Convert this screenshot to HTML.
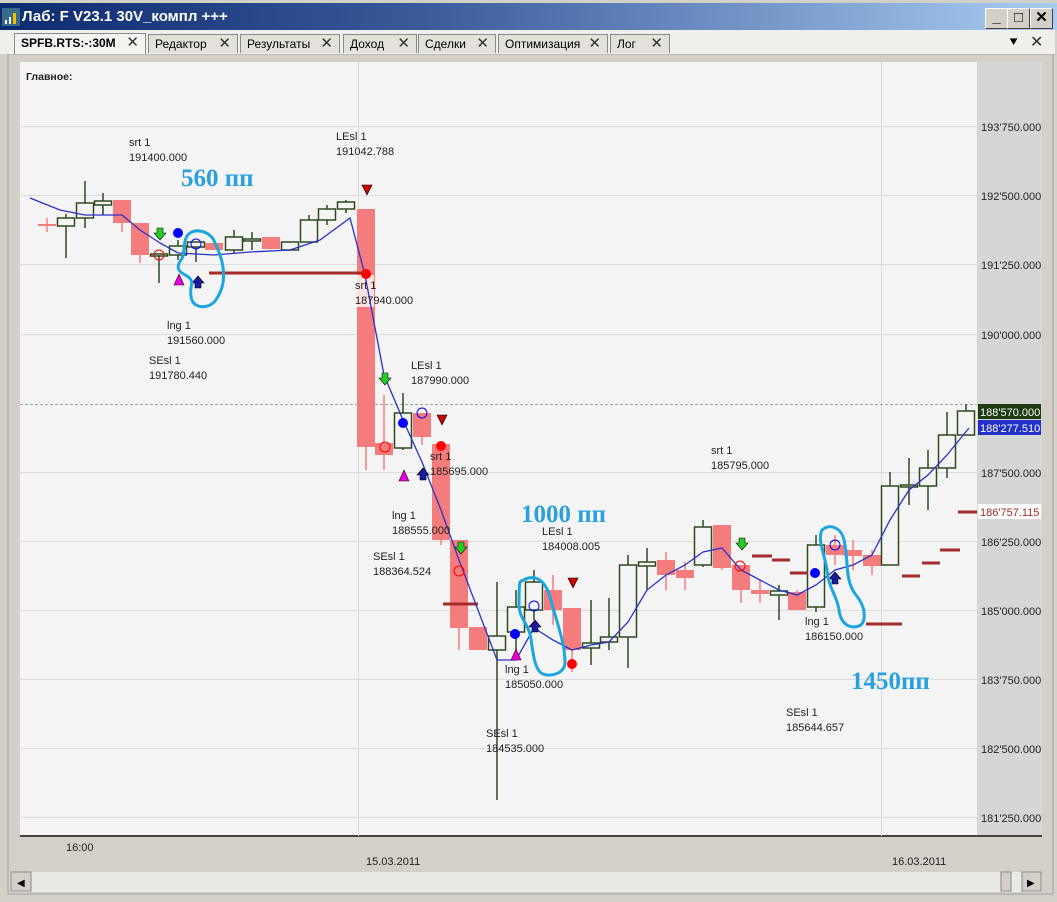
<!DOCTYPE html>
<html><head><meta charset="utf-8"><style>
body{margin:0;width:1057px;height:902px;overflow:hidden;background:#d4d0c8;font-family:"Liberation Sans",sans-serif;position:relative}
.abs{position:absolute}
.title{left:0;top:3px;width:1057px;height:27px;background:linear-gradient(90deg,#0c2a6e 0%,#3a5a9a 40%,#a8cdf2 100%)}
.title span{position:absolute;left:22px;top:5px;color:#fff;font-weight:bold;font-size:15px}
.wb{position:absolute;top:5px;width:21px;height:19px;background:#d4d0c8;border:1px solid;border-color:#fff #404040 #404040 #fff;font-size:15px;text-align:center;line-height:18px;font-weight:bold}
.tabs{left:0;top:30px;width:1055px;height:24px;background:#f0efec}
.tab{position:absolute;top:4px;height:19px;border:1px solid #8a8a8a;border-bottom:none;background:#e4e1da;font-size:12px;line-height:18px;padding-left:6px;box-sizing:border-box}
.tab b{position:absolute;right:6px;top:0;font-weight:normal;font-size:15px;color:#333}
svg text{font-family:"Liberation Sans",sans-serif}
</style></head><body>
<div class="abs title"><svg width="18" height="18" style="position:absolute;left:2px;top:5px"><rect width="18" height="18" fill="#3a6a8a"/><rect x="3" y="12" width="2" height="4" fill="#fff"/><rect x="7" y="9" width="2" height="7" fill="#fff"/><rect x="11" y="5" width="3" height="11" fill="#f2c200"/></svg><span>Лаб: F V23.1 30V_компл +++</span>
<div class="wb" style="left:985px">_</div><div class="wb" style="left:1007px">□</div><div class="wb" style="left:1030px">✕</div></div>
<div class="abs tabs">
<div class="tab" style="left:14px;width:132px;background:#f4f3ef;font-weight:bold;height:21px;top:3px">SPFB.RTS:-:30M<b>✕</b></div>
<div class="tab" style="left:148px;width:90px">Редактор<b>✕</b></div>
<div class="tab" style="left:240px;width:100px">Результаты<b>✕</b></div>
<div class="tab" style="left:343px;width:74px">Доход<b>✕</b></div>
<div class="tab" style="left:418px;width:78px">Сделки<b>✕</b></div>
<div class="tab" style="left:498px;width:110px">Оптимизация<b>✕</b></div>
<div class="tab" style="left:610px;width:60px">Лог<b>✕</b></div>
<div style="position:absolute;left:1008px;top:4px;font-size:14px">⯆</div><div style="position:absolute;left:1030px;top:2px;font-size:16px;color:#333">✕</div>
</div>
<svg class="abs" style="left:0;top:54px" width="1057" height="848">
<rect x="8" y="0" width="1045" height="840" fill="#d4d0c8" stroke="#a0a0a0"/>
<rect x="18" y="7" width="1026" height="790" fill="#d4d0c8"/>
<rect x="20" y="8" width="957" height="774" fill="#f4f4f4"/>
<rect x="977" y="8" width="65" height="774" fill="#d6d6d6"/>
<line x1="20" y1="782" x2="1042" y2="782" stroke="#444" stroke-width="2"/>
<rect x="10" y="818" width="1032" height="20" fill="#ebe9e4"/>
<rect x="11" y="818" width="20" height="19" fill="#d4d0c8" stroke="#888"/><text x="17" y="832" font-size="10">◀</text>
<rect x="1001" y="818" width="10" height="19" fill="#d4d0c8" stroke="#888"/>
<rect x="1022" y="818" width="19" height="19" fill="#d4d0c8" stroke="#888"/><text x="1027" y="832" font-size="10">▶</text>
</svg>
<svg class="abs" style="left:0;top:0" width="1057" height="902" id="ch">
<g stroke="#dcdcdc" stroke-width="1">
<line x1="20" x2="977" y1="126.5" y2="126.5"/><line x1="20" x2="977" y1="195.5" y2="195.5"/><line x1="20" x2="977" y1="264.5" y2="264.5"/><line x1="20" x2="977" y1="334.5" y2="334.5"/><line x1="20" x2="977" y1="472.5" y2="472.5"/><line x1="20" x2="977" y1="541.5" y2="541.5"/><line x1="20" x2="977" y1="610.5" y2="610.5"/><line x1="20" x2="977" y1="679.5" y2="679.5"/><line x1="20" x2="977" y1="748.5" y2="748.5"/><line x1="20" x2="977" y1="817.5" y2="817.5"/>
<line x1="358.5" x2="358.5" y1="62" y2="836"/><line x1="881.5" x2="881.5" y1="62" y2="836"/>
</g>
<line x1="20" x2="977" y1="404.5" y2="404.5" stroke="#9aa89a" stroke-dasharray="3,2"/>
<g id="cd"></g>
<g stroke="#a52a2a" stroke-width="3">
<line x1="209" x2="362" y1="273" y2="273"/><line x1="443" x2="478" y1="604" y2="604"/><line x1="752" x2="772" y1="556" y2="556"/><line x1="772" x2="790" y1="560" y2="560"/><line x1="790" x2="808" y1="573" y2="573"/><line x1="866" x2="902" y1="624" y2="624"/><line x1="902" x2="920" y1="576" y2="576"/><line x1="922" x2="940" y1="563" y2="563"/><line x1="940" x2="960" y1="550" y2="550"/><line x1="958" x2="977" y1="512" y2="512"/>
</g>
<polyline fill="none" stroke="#2a32c8" stroke-width="1.3" points="30,198 60,210 85,215 122,215 140,230 160,243 178,253 214,255 250,252 290,250 320,240 350,218 365,275 384,375 403,420 422,462 441,510 459,560 478,610 497,660 516,660 534,628 553,640 572,650 591,645 609,642 628,622 647,590 666,575 685,565 703,552 722,548 741,570 760,580 779,590 797,595 816,585 835,570 853,565 872,555 890,520 909,490 928,475 947,455 969,428"/>
<!-- markers -->
<g>
<circle cx="159" cy="255" r="5" fill="none" stroke="red"/><circle cx="385" cy="447" r="5" fill="none" stroke="red"/><circle cx="459" cy="571" r="5" fill="none" stroke="red"/><circle cx="740" cy="566" r="5" fill="none" stroke="red"/>
<circle cx="196" cy="244" r="5" fill="none" stroke="blue"/><circle cx="422" cy="413" r="5" fill="none" stroke="blue"/><circle cx="534" cy="606" r="5" fill="none" stroke="blue"/><circle cx="835" cy="545" r="5" fill="none" stroke="blue"/>
<circle cx="178" cy="233" r="5" fill="blue"/><circle cx="403" cy="423" r="5" fill="blue"/><circle cx="515" cy="634" r="5" fill="blue"/><circle cx="815" cy="573" r="5" fill="blue"/>
<circle cx="366" cy="274" r="5" fill="red"/><circle cx="441" cy="446" r="5" fill="red"/><circle cx="572" cy="664" r="5" fill="red"/>
<g fill="#22cc22" stroke="#111" stroke-width=".6"><path d="M157 228h6v5h3l-6 7l-6-7h3z"/><path d="M382 373h6v5h3l-6 7l-6-7h3z"/><path d="M458 542h6v5h3l-6 7l-6-7h3z"/><path d="M739 538h6v5h3l-6 7l-6-7h3z"/></g>
<g fill="#1a1aa0" stroke="#000" stroke-width=".6"><path d="M195 288h6v-5h3l-6-7l-6 7h3z"/><path d="M420 480h6v-5h3l-6-7l-6 7h3z"/><path d="M532 632h6v-5h3l-6-7l-6 7h3z"/><path d="M832 584h6v-5h3l-6-7l-6 7h3z"/></g>
<g fill="#e000e0" stroke="#400" stroke-width=".6"><path d="M179 274l-5 11h10z"/><path d="M404 470l-5 11h10z"/><path d="M516 649l-5 11h10z"/></g>
<g fill="#cc0000" stroke="#000" stroke-width=".6"><path d="M362 185h10l-5 10z"/><path d="M437 415h10l-5 10z"/><path d="M568 578h10l-5 10z"/></g>
</g>
<g fill="none" stroke="#1ba6e0" stroke-width="3">
<path d="M186 238c5-12 25-8 29 5c10 20 12 40 2 55c-6 12-25 12-26-2c-2-10 5-14-4-20c-8-4-12-8-6-16c4-5 2-15 5-22z"/>
<path d="M520 582c15-10 25-2 30 15c5 20 15 45 15 65c0 12-15 15-22 12c-8-3-10-20-12-35c-2-15-12-20-12-35c0-8 0-18 1-22z"/>
<path d="M822 530c10-8 20 0 22 10c5 20 0 40 12 55c10 12 10 25 5 30c-10 5-20 0-22-15c-2-15-10-20-12-40c-2-15-10-30-5-40z"/>
</g>
<g font-size="11" fill="#222">
<text x="26" y="80" font-weight="bold" font-size="10.5">Главное:</text>
<text x="129" y="146">srt 1</text><text x="129" y="161">191400.000</text>
<text x="336" y="140">LEsl 1</text><text x="336" y="155">191042.788</text>
<text x="355" y="289">srt 1</text><text x="355" y="304">187940.000</text>
<text x="167" y="329">lng 1</text><text x="167" y="344">191560.000</text>
<text x="149" y="364">SEsl 1</text><text x="149" y="379">191780.440</text>
<text x="411" y="369">LEsl 1</text><text x="411" y="384">187990.000</text>
<text x="430" y="460">srt 1</text><text x="430" y="475">185695.000</text>
<text x="392" y="519">lng 1</text><text x="392" y="534">188555.000</text>
<text x="373" y="560">SEsl 1</text><text x="373" y="575">188364.524</text>
<text x="542" y="535">LEsl 1</text><text x="542" y="550">184008.005</text>
<text x="711" y="454">srt 1</text><text x="711" y="469">185795.000</text>
<text x="505" y="673">lng 1</text><text x="505" y="688">185050.000</text>
<text x="805" y="625">lng 1</text><text x="805" y="640">186150.000</text>
<text x="486" y="737">SEsl 1</text><text x="486" y="752">184535.000</text>
<text x="786" y="716">SEsl 1</text><text x="786" y="731">185644.657</text>
<text x="66" y="851">16:00</text><text x="366" y="865">15.03.2011</text><text x="892" y="865">16.03.2011</text>
<text x="981" y="131">193'750.000</text><text x="981" y="200">192'500.000</text><text x="981" y="269">191'250.000</text><text x="981" y="339">190'000.000</text><text x="981" y="477">187'500.000</text><text x="981" y="546">186'250.000</text><text x="981" y="615">185'000.000</text><text x="981" y="684">183'750.000</text><text x="981" y="753">182'500.000</text><text x="981" y="822">181'250.000</text>
</g>
<rect x="978" y="404" width="63" height="15" fill="#1e3a10"/><text x="980" y="416" font-size="11" fill="#fff">188'570.000</text>
<rect x="978" y="420" width="63" height="15" fill="#2030c8"/><text x="980" y="432" font-size="11" fill="#fff">188'277.510</text>
<rect x="978" y="504" width="63" height="15" fill="#fff"/><text x="980" y="516" font-size="11" fill="#a52a2a">186'757.115</text>
<g font-family="Liberation Serif,serif" font-weight="bold" font-size="25" fill="#2aa0dc">
<text x="181" y="186" style="font-family:'Liberation Serif',serif">560 пп</text>
<text x="521" y="522" style="font-family:'Liberation Serif',serif">1000 пп</text>
<text x="851" y="689" style="font-family:'Liberation Serif',serif">1450пп</text>
</g>
</svg>
<script>
var c=[[47,225,225,218,232,2],[66,218,226,214,258,0],[85,203,218,181,228,0],[103,201,205,193,215,0],[122,200,223,200,232,1],[140,223,255,223,263,1],[159,254,256,254,283,0],[178,246,255,240,260,0],[196,242,247,242,262,0],[214,243,250,243,250,1],[234,237,250,230,253,0],[252,239,241,232,250,0],[271,237,249,237,249,1],[290,242,250,242,250,0],[309,220,242,215,242,0],[327,209,220,205,225,0],[346,202,209,200,213,0],[366,209,447,209,470,1],[384,443,455,395,470,1],[403,413,448,393,450,0],[422,413,437,413,445,1],[441,444,540,444,545,1],[459,540,628,540,650,1],[478,627,650,627,650,1],[497,636,650,582,800,0],[516,607,632,590,660,0],[534,582,610,570,620,0],[553,590,610,575,625,1],[572,608,650,608,672,1],[591,643,648,600,665,0],[609,637,642,598,650,0],[628,565,637,555,668,0],[647,562,566,548,590,0],[666,560,575,552,590,1],[685,570,578,562,590,1],[703,527,565,520,567,0],[722,525,568,525,570,1],[741,565,590,565,603,1],[760,590,594,580,603,1],[779,591,595,585,620,0],[797,592,610,590,610,1],[816,545,607,535,612,0],[835,545,555,535,565,1],[853,550,556,540,570,1],[872,555,566,550,575,1],[890,486,565,472,565,0],[909,485,487,458,505,0],[928,468,486,450,510,0],[947,435,468,412,478,0],[966,411,435,404,435,0]];
var s='';c.forEach(function(k){var x=k[0],o=k[1],cl=k[2],h=k[3],l=k[4],t=k[5];var col=t==0?'#2d4a1e':'#f47c7c';
s+='<line x1="'+x+'" x2="'+x+'" y1="'+h+'" y2="'+l+'" stroke="'+col+'" stroke-width="1.5"/>';
var hh=Math.max(cl-o,2);
if(t==2)s+='<line x1="'+(x-9)+'" x2="'+(x+9)+'" y1="'+o+'" y2="'+o+'" stroke="'+col+'" stroke-width="2"/>';
else if(t==0)s+='<rect x="'+(x-8.5)+'" y="'+o+'" width="17" height="'+hh+'" fill="#f4f4f4" stroke="'+col+'" stroke-width="1.5"/>';
else s+='<rect x="'+(x-9)+'" y="'+o+'" width="18" height="'+hh+'" fill="'+col+'"/>';});
s+='<rect x="357" y="275" width="17" height="32" fill="#fbe2e2"/>';
document.getElementById('cd').innerHTML=s;
</script>
</body></html>
